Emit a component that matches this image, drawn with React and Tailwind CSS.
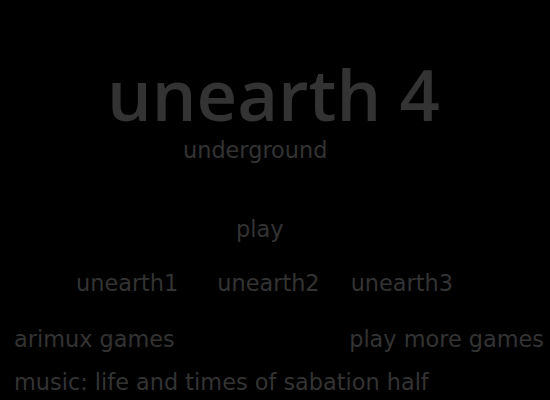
export default function App() {
  return (
    <div className="w-[550px] h-[400px] bg-black text-[#333333] font-['DejaVu_Sans',sans-serif] text-[22.4px] leading-[26px] overflow-hidden flex flex-col">
      <div className="mt-[54px] pl-[107px] font-['Open_Sans',sans-serif] font-semibold text-[70.5px] leading-[80px] whitespace-nowrap">unearth 4</div>
      <div className="mt-[3px] pl-[183px]">underground</div>
      <div className="mt-[53px] pl-[236px]">play</div>
      <div className="mt-[28px] flex">
        <span className="ml-[76px]">unearth1</span>
        <span className="ml-[39px]">unearth2</span>
        <span className="ml-[31px]">unearth3</span>
      </div>
      <div className="mt-[30px] flex justify-between pl-[14px] pr-[6px]">
        <span>arimux games</span>
        <span>play more games</span>
      </div>
      <div className="mt-[17px] pl-[14px] whitespace-nowrap">music: life and times of sabation half</div>
    </div>
  );
}
